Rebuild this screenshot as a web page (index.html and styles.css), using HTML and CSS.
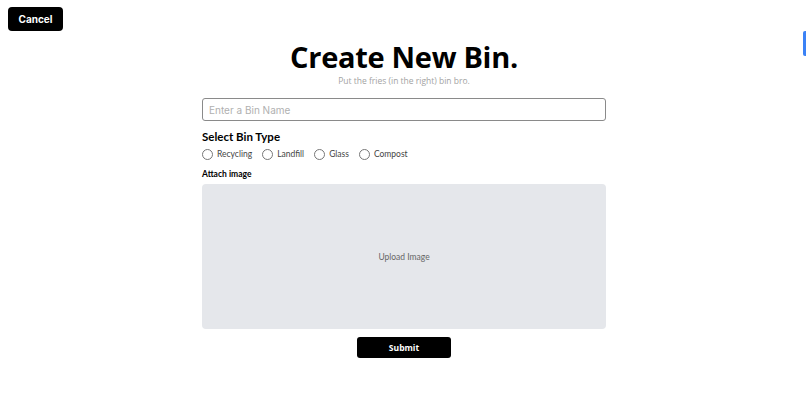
FILE: index.html
```html
<!DOCTYPE html>
<html>
<head>
<meta charset="utf-8">
<link rel="stylesheet" href="styles.css">
</head>
<body>
<div class="topbar">
  <button class="cancel">Cancel</button>
</div>
<div class="side-tab"></div>
<main class="form">
  <h1 class="title">Create New Bin.</h1>
  <p class="subtitle">Put the fries (in the right) bin bro.</p>
  <input class="name" type="text" placeholder="Enter a Bin Name">
  <h2 class="section">Select Bin Type</h2>
  <div class="radios">
    <label class="radio"><span class="dot"></span>Recycling</label>
    <label class="radio"><span class="dot"></span>Landfill</label>
    <label class="radio"><span class="dot"></span>Glass</label>
    <label class="radio"><span class="dot"></span>Compost</label>
  </div>
  <h3 class="attach">Attach image</h3>
  <div class="upload">Upload Image</div>
  <button class="submit">Submit</button>
</main>
</body>
</html>
```
FILE: styles.css
```css
html, body { margin: 0; padding: 0; background: #fff; }
body { font-family: "Lato", "Open Sans", sans-serif; color: #000; position: relative; width: 806px; height: 418px; overflow: hidden; }
.topbar { padding: 7px 0 0 8px; height: 24px; }
.cancel {
  width: 55px; height: 24px; background: #000; color: #fff; border: 0; border-radius: 4px;
  font-family: "Inter", "DejaVu Sans", sans-serif; font-weight: 700; font-size: 10px; padding: 0; display: block;
}
.side-tab { position: absolute; right: 0; top: 31px; width: 3px; height: 25px; background: #3b82f6; border-radius: 2px 0 0 2px; }
.form { width: 404px; margin: 0 auto; display: flex; flex-direction: column; position: relative; left: 1px; }
.title { margin: 8px 0 0; text-align: center; font-family: "Open Sans", sans-serif; font-size: 29px; font-weight: 700; line-height: 36px; letter-spacing: -0.3px; }
.subtitle { margin: 0; text-align: center; font-family: "Open Sans", sans-serif; font-size: 8.5px; color: #a3a3a3; line-height: 12px; }
.name {
  margin-top: 11px; height: 23px; box-sizing: border-box; border: 1px solid #8a8a8a; border-radius: 3px;
  padding: 0 6px; font-family: "Inter", "DejaVu Sans", sans-serif; font-size: 10px; outline: none;
}
.name::placeholder { color: #b0b0b0; }
.section { margin: 9px 0 0; font-size: 11.5px; font-weight: 700; line-height: 14px; }
.radios { display: flex; margin-top: 4px; height: 12px; align-items: center; }
.radio { display: flex; align-items: center; font-size: 8.5px; color: #444; margin-right: 10px; }
.dot { width: 9px; height: 9px; border: 1px solid #777; border-radius: 50%; margin-right: 4px; box-sizing: content-box; }
.attach { margin: 8px 0 0; font-size: 8.5px; font-weight: 700; line-height: 12px; }
.upload {
  margin-top: 4px; height: 145px; background: #e5e7eb; border-radius: 4px; display: flex; align-items: center;
  justify-content: center; font-size: 8.5px; color: #666;
}
.submit {
  align-self: center; margin-top: 8px; width: 94px; height: 21px; background: #000; color: #fff; border: 0; border-radius: 3px;
  font-family: "Open Sans", sans-serif; font-weight: 700; font-size: 8.5px; padding: 0;
}
```
